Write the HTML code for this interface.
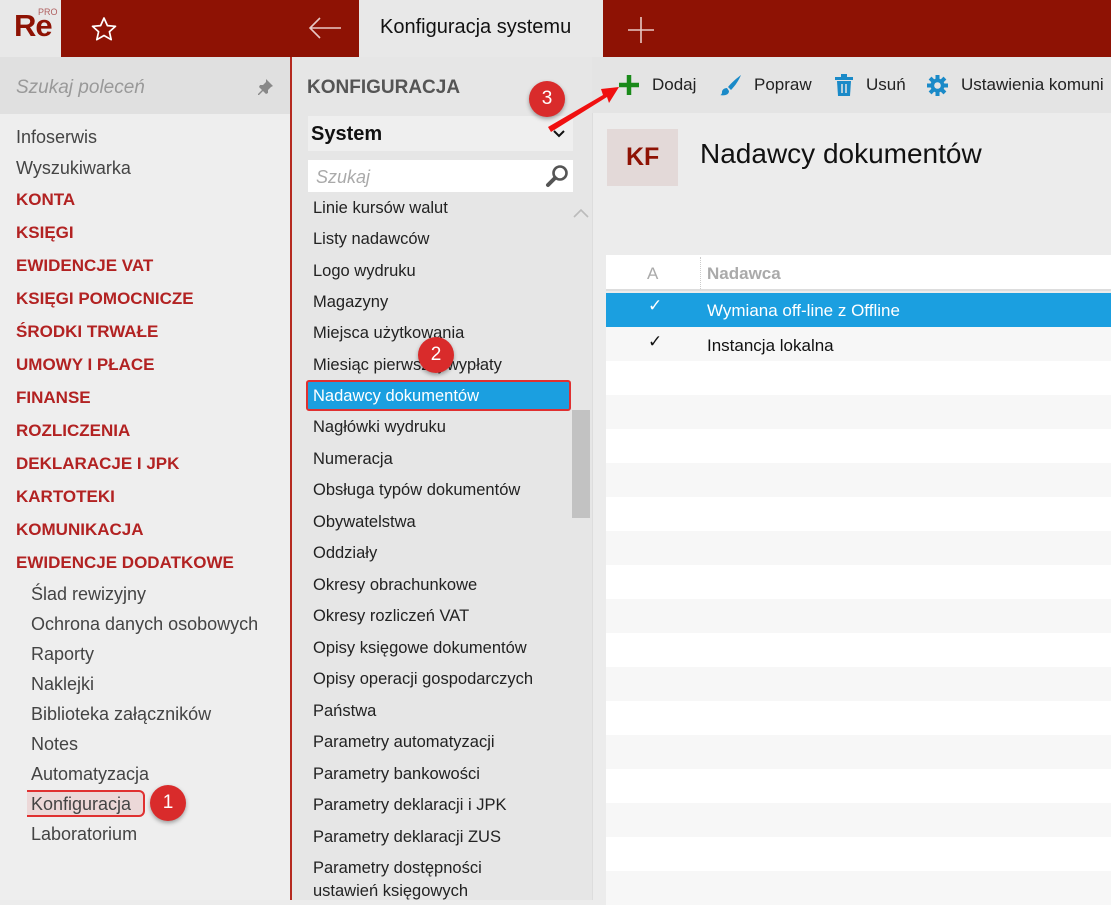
<!DOCTYPE html>
<html><head><meta charset="utf-8"><style>
*{margin:0;padding:0;box-sizing:border-box}
body{width:1111px;height:900px;overflow:hidden;background:#ececec;font-family:"Segoe UI","Liberation Sans",sans-serif;position:relative}
.a{position:absolute}
.t{position:absolute;white-space:nowrap}
.left .t{left:16px;font-size:18px;color:#444;margin-top:2px}
.left .c{color:#b22222;font-size:17px;font-weight:bold}
.left .s{left:31px}
.mid .t{left:313px;font-size:16.5px;color:#222;margin-top:2px}
.badge{position:absolute;width:36px;height:36px;border-radius:50%;background:#d92b2b;color:#fff;font-size:19px;text-align:center;line-height:36px;box-shadow:0 2px 4px rgba(0,0,0,.35)}
.row{position:absolute;left:606px;width:505px;height:34px}
</style></head><body>
<!-- top bar -->
<div class="a" style="left:0;top:0;width:1111px;height:57px;background:#8e1204"></div>
<div class="a" style="left:0;top:0;width:61px;height:57px;background:#e8e8e8"></div>
<div class="t" style="left:14px;top:8px;font-size:31px;color:#8e1204;letter-spacing:-1px;font-weight:bold">Re</div>
<div class="t" style="left:38px;top:7px;font-size:9px;color:#b06060">PRO</div>
<svg class="a" style="left:90px;top:16px" width="28" height="26" viewBox="0 0 28 26"><path d="M14 2l3.4 7.6 8.1.7-6.1 5.4 1.8 8L14 19.5 6.8 23.7l1.8-8L2.5 10.3l8.1-.7z" fill="none" stroke="#fff" stroke-width="1.7" stroke-linejoin="round"/></svg>
<svg class="a" style="left:308px;top:17px" width="34" height="22"><path d="M2 11h31M12 1L2 11l10 10" fill="none" stroke="#e8c8c4" stroke-width="1.6"/></svg>
<div class="a" style="left:359px;top:0;width:244px;height:57px;background:#e8e8e8"></div>
<div class="t" style="left:380px;top:16px;font-size:20px;color:#111">Konfiguracja systemu</div>
<svg class="a" style="left:627px;top:16px" width="28" height="28"><path d="M14 1v26M1 14h26" stroke="#e8c8c4" stroke-width="1.6"/></svg>
<!-- left sidebar -->
<div class="a" style="left:0;top:57px;width:290px;height:843px;background:#eeeeee"></div>
<div class="a" style="left:0;top:57px;width:290px;height:57px;background:#e0e0e0"></div>
<div class="t" style="left:16px;top:77px;font-size:19px;color:#999;font-style:italic">Szukaj poleceń</div>
<svg class="a" style="left:256px;top:78px" width="18" height="18"><path d="M10 1l7 7-2 1-3 3 0 3-2 1-3-3-4 4-1 0 0-1 4-4-3-3 1-2 3 0 3-3z" fill="#888"/></svg>
<div class="a" style="left:290px;top:57px;width:2px;height:843px;background:#b52a20"></div>
<div class="left">
<div class="t" style="top:125px">Infoserwis</div>
<div class="t" style="top:156px">Wyszukiwarka</div>
<div class="t c" style="top:188px">KONTA</div>
<div class="t c" style="top:221px">KSIĘGI</div>
<div class="t c" style="top:254px">EWIDENCJE VAT</div>
<div class="t c" style="top:287px">KSIĘGI POMOCNICZE</div>
<div class="t c" style="top:320px">ŚRODKI TRWAŁE</div>
<div class="t c" style="top:353px">UMOWY I PŁACE</div>
<div class="t c" style="top:386px">FINANSE</div>
<div class="t c" style="top:419px">ROZLICZENIA</div>
<div class="t c" style="top:452px">DEKLARACJE I JPK</div>
<div class="t c" style="top:485px">KARTOTEKI</div>
<div class="t c" style="top:518px">KOMUNIKACJA</div>
<div class="t c" style="top:551px">EWIDENCJE DODATKOWE</div>
<div class="t s" style="top:582px">Ślad rewizyjny</div>
<div class="t s" style="top:612px">Ochrona danych osobowych</div>
<div class="t s" style="top:642px">Raporty</div>
<div class="t s" style="top:672px">Naklejki</div>
<div class="t s" style="top:702px">Biblioteka załączników</div>
<div class="t s" style="top:732px">Notes</div>
<div class="t s" style="top:762px">Automatyzacja</div>
<div class="a" style="left:27px;top:790px;width:118px;height:27px;border:2px solid #e03030;border-left:none;border-radius:0 6px 6px 0;background:rgba(230,150,150,.25)"></div>
<div class="t s" style="top:792px">Konfiguracja</div>
<div class="t s" style="top:822px">Laboratorium</div>
</div>
<div class="badge" style="left:150px;top:785px">1</div>
<!-- middle -->
<div class="a" style="left:292px;top:57px;width:300px;height:843px;background:#e6e6e6"></div>
<div class="t" style="left:307px;top:77px;font-size:19px;font-weight:bold;color:#555">KONFIGURACJA</div>
<div class="a" style="left:308px;top:116px;width:265px;height:35px;background:#efefef"></div>
<div class="t" style="left:311px;top:123px;font-size:20px;color:#111;font-weight:600">System</div>
<svg class="a" style="left:553px;top:130px" width="12" height="8"><path d="M1 1l5 5 5-5" fill="none" stroke="#111" stroke-width="2"/></svg>
<div class="a" style="left:308px;top:160px;width:265px;height:32px;background:#fff"></div>
<div class="t" style="left:316px;top:167px;font-size:18px;color:#aaa;font-style:italic">Szukaj</div>
<svg class="a" style="left:545px;top:163px" width="26" height="26"><circle cx="15" cy="10" r="6.5" fill="none" stroke="#555" stroke-width="2.6"/><path d="M10 15l-7 7" stroke="#555" stroke-width="4" stroke-linecap="round"/></svg>
<svg class="a" style="left:573px;top:208px" width="16" height="10"><path d="M1 9l7-7 7 7" fill="none" stroke="#bbb" stroke-width="1.6"/></svg>
<div class="a" style="left:572px;top:410px;width:18px;height:108px;background:#c2c2c2"></div>
<div class="a" style="left:306px;top:380px;width:265px;height:31px;background:#1b9fe0;border:2px solid #e03030;border-radius:3px"></div>
<div class="mid">
<div class="t" style="top:197px">Linie kursów walut</div>
<div class="t" style="top:228px">Listy nadawców</div>
<div class="t" style="top:260px">Logo wydruku</div>
<div class="t" style="top:291px">Magazyny</div>
<div class="t" style="top:322px">Miejsca użytkowania</div>
<div class="t" style="top:354px">Miesiąc pierwszej wypłaty</div>
<div class="t" style="top:385px;color:#fff">Nadawcy dokumentów</div>
<div class="t" style="top:416px">Nagłówki wydruku</div>
<div class="t" style="top:448px">Numeracja</div>
<div class="t" style="top:479px">Obsługa typów dokumentów</div>
<div class="t" style="top:511px">Obywatelstwa</div>
<div class="t" style="top:542px">Oddziały</div>
<div class="t" style="top:574px">Okresy obrachunkowe</div>
<div class="t" style="top:605px">Okresy rozliczeń VAT</div>
<div class="t" style="top:637px">Opisy księgowe dokumentów</div>
<div class="t" style="top:668px">Opisy operacji gospodarczych</div>
<div class="t" style="top:700px">Państwa</div>
<div class="t" style="top:731px">Parametry automatyzacji</div>
<div class="t" style="top:763px">Parametry bankowości</div>
<div class="t" style="top:794px">Parametry deklaracji i JPK</div>
<div class="t" style="top:826px">Parametry deklaracji ZUS</div>
<div class="t" style="top:857px">Parametry dostępności</div>
<div class="t" style="top:880px">ustawień księgowych</div>
</div>
<div class="badge" style="left:418px;top:337px">2</div>
<!-- right -->
<div class="a" style="left:592px;top:57px;width:519px;height:56px;background:#e4e4e4"></div>
<div class="a" style="left:592px;top:113px;width:1px;height:787px;background:#ddd"></div>
<svg class="a" style="left:619px;top:75px" width="20" height="20"><path d="M10 0v20M0 10h20" stroke="#1a8a1a" stroke-width="4.5"/></svg>
<div class="t" style="left:652px;top:75px;font-size:17px;color:#222">Dodaj</div>
<svg class="a" style="left:719px;top:74px" width="24" height="22"><path d="M22 1C18 4 12 9 9 13l3 3C16 12 20 6 22 1z" fill="#1a8ac8"/><path d="M8 14c-3 0-5 2-5 4 0 2-1 3-2 3 4 1 9 0 9-4z" fill="#1a8ac8"/></svg>
<div class="t" style="left:754px;top:75px;font-size:17px;color:#222">Popraw</div>
<svg class="a" style="left:834px;top:74px" width="20" height="22"><rect x="1" y="3" width="18" height="3" fill="#1a8ac8"/><rect x="7" y="0" width="6" height="3" fill="#1a8ac8"/><path d="M3 7h14l-1 15H4z" fill="#1a8ac8"/><path d="M8 10v9M12 10v9" stroke="#e4e4e4" stroke-width="1.5"/></svg>
<div class="t" style="left:866px;top:75px;font-size:17px;color:#222">Usuń</div>
<svg class="a" style="left:927px;top:75px" width="21" height="21" viewBox="0 0 21 21"><g fill="#1a8ac8"><circle cx="10.5" cy="10.5" r="7"/><rect x="8.5" y="0" width="4" height="21"/><rect x="0" y="8.5" width="21" height="4"/><rect x="8.5" y="0" width="4" height="21" transform="rotate(45 10.5 10.5)"/><rect x="8.5" y="0" width="4" height="21" transform="rotate(-45 10.5 10.5)"/></g><circle cx="10.5" cy="10.5" r="3.3" fill="#e4e4e4"/></svg>
<div class="t" style="left:961px;top:75px;font-size:17px;color:#222">Ustawienia komuni</div>
<div class="a" style="left:607px;top:129px;width:71px;height:57px;background:#e3d9d8"></div>
<div class="t" style="left:626px;top:143px;font-size:25px;color:#8e1204;font-weight:600">KF</div>
<div class="t" style="left:700px;top:138px;font-size:28px;color:#111">Nadawcy dokumentów</div>
<div class="a" style="left:606px;top:255px;width:505px;height:36px;background:#fff;border-bottom:2px solid #ddd"></div>
<div class="a" style="left:700px;top:257px;width:0;height:32px;border-left:1px dotted #ccc"></div>
<div class="t" style="left:647px;top:264px;font-size:17px;color:#aaa">A</div>
<div class="t" style="left:707px;top:264px;font-size:17px;color:#aaa;font-weight:600">Nadawca</div>
<div class="row" style="top:293px;background:#1b9fe0"></div>
<div class="t" style="left:648px;top:296px;font-size:17px;color:#fff">✓</div>
<div class="t" style="left:707px;top:301px;font-size:17px;color:#fff">Wymiana off-line z Offline</div>
<div class="row" style="top:327px;background:#f7f7f7"></div>
<div class="t" style="left:648px;top:332px;font-size:17px;color:#111">✓</div>
<div class="t" style="left:707px;top:336px;font-size:17px;color:#111">Instancja lokalna</div>
<div class="row" style="top:361px;background:#fff"></div>
<div class="row" style="top:395px;background:#f7f7f7"></div>
<div class="row" style="top:429px;background:#fff"></div>
<div class="row" style="top:463px;background:#f7f7f7"></div>
<div class="row" style="top:497px;background:#fff"></div>
<div class="row" style="top:531px;background:#f7f7f7"></div>
<div class="row" style="top:565px;background:#fff"></div>
<div class="row" style="top:599px;background:#f7f7f7"></div>
<div class="row" style="top:633px;background:#fff"></div>
<div class="row" style="top:667px;background:#f7f7f7"></div>
<div class="row" style="top:701px;background:#fff"></div>
<div class="row" style="top:735px;background:#f7f7f7"></div>
<div class="row" style="top:769px;background:#fff"></div>
<div class="row" style="top:803px;background:#f7f7f7"></div>
<div class="row" style="top:837px;background:#fff"></div>
<div class="row" style="top:871px;background:#f7f7f7"></div>
<!-- badge 3 with arrow -->
<svg class="a" style="left:545px;top:82px" width="75" height="50"><path d="M3 45L58 13l-2-6 18-2-10 16-2-6L6 50z" fill="#f01010"/></svg>
<div class="badge" style="left:529px;top:81px">3</div>
</body></html>
